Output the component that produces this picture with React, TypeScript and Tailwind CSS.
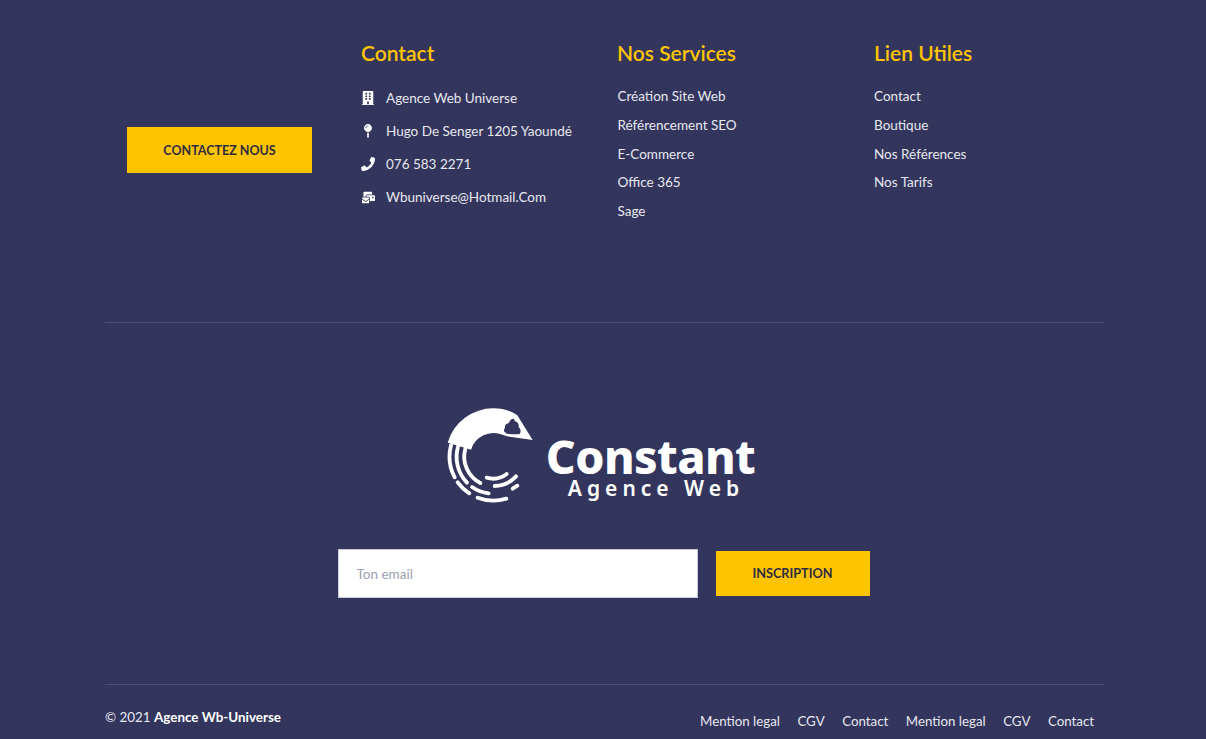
import { FaBuilding, FaMapPin, FaPhone, FaMailBulk } from "react-icons/fa"

const FONT = "font-['Lato','Noto_Sans',sans-serif]"

const contactRows = [
  { icon: "building", label: "Agence Web Universe" },
  { icon: "pin", label: "Hugo De Senger 1205 Yaoundé" },
  { icon: "phone", label: "076 583 2271" },
  { icon: "mail", label: "Wbuniverse@Hotmail.Com" },
]

const services = ["Création Site Web", "Référencement SEO", "E-Commerce", "Office 365", "Sage"]
const liens = ["Contact", "Boutique", "Nos Références", "Nos Tarifs"]
const bottomLinks = ["Mention legal", "CGV", "Contact", "Mention legal", "CGV", "Contact"]

function RowIcon({ name }: { name: string }) {
  if (name === "building") return <FaBuilding size={14} />
  if (name === "pin") return <FaMapPin size={14} />
  if (name === "phone") return <FaPhone size={14} />
  return <FaMailBulk size={13} />
}

function Logo() {
  return (
    <div className="flex items-start">
      {/* mark traced at 3x, rings are concentric around 165,165 */}
      <svg width="90" height="97" viewBox="22 20 270 291" className="mr-[10px] shrink-0">
        <path
          d="M27 124A142 142 0 0 1 165 21C192 21 216 28 236 42L282 116L205 105C200 103 196 101 192 100A71 71 0 0 0 97 145Z"
          fill="#fff"
        />
        <path
          d="M223 52c-6 1-11 6-12 13-8 1-14 7-12 15-3 3-4 7-2 11l8 6c13 2 26 3 38 1 5-8 3-15-3-20 2-10-4-17-11-18-1-4-3-7-6-8z"
          fill="#33355c"
        />
        <g fill="none" stroke="#fff" strokeWidth="11.5" strokeLinecap="round">
          <path d="M37 132A133 133 0 0 0 48 228" />
          <path d="M57 243A133 133 0 0 0 92 276" />
          <path d="M117 289A133 133 0 0 0 203 292" />
          <path d="M58 136A112 112 0 0 0 85 244" />
          <path d="M100 257A112 112 0 0 0 150 276" />
          <path d="M222 262L236 253" />
          <path d="M80 142A89 89 0 0 0 125 245" />
          <path d="M168 254A89 89 0 0 0 232 225" />
          <path d="M144 229A67 67 0 0 0 204 218" />
        </g>
      </svg>
      <div className="flex flex-col items-center pt-[26px]">
        <span className="font-['Noto_Sans',sans-serif] text-[46.5px] leading-[44px] font-extrabold tracking-[-0.6px] text-white">
          Constant
        </span>
        <span className="pl-[11px] font-['Noto_Sans',sans-serif] text-[21px] leading-[20px] font-semibold tracking-[5px] text-white">
          Agence Web
        </span>
      </div>
    </div>
  )
}

export default function App() {
  return (
    <div className={`h-[739px] overflow-hidden bg-[#33355c] text-white ${FONT}`}>
      <div className="ml-[105px] w-[999px]">
        <div className="flex h-[323px] border-b border-[#4d4f75]">
          <div className="w-[256px] pt-[127px] pl-[22px]">
            <button className="h-[46px] w-[185px] bg-[#ffc400] pt-[2px] text-[12.5px] font-bold text-[#2d2d40]">CONTACTEZ NOUS</button>
          </div>

          <div className="w-[256.5px]">
            <h4 className="pt-[37px] text-[21px] leading-[32px] font-semibold text-[#ffc400]">Contact</h4>
            <ul className="mt-[19px] flex flex-col gap-[13px]">
              {contactRows.map((r) => (
                <li key={r.label} className="flex h-5 items-center gap-[11px] text-[13.5px] text-[#e8e8f0]">
                  <span className="flex w-[14px] justify-center text-white">
                    <RowIcon name={r.icon} />
                  </span>
                  <span>{r.label}</span>
                </li>
              ))}
            </ul>
          </div>

          <div className="w-[256.5px]">
            <h4 className="-ml-[0.5px] pt-[37px] text-[21px] leading-[32px] font-semibold text-[#ffc400]">Nos Services</h4>
            <ul className="mt-[17px] flex flex-col gap-[8.8px]">
              {services.map((s) => (
                <li key={s} className="h-5 text-[13.5px] leading-5 text-[#e8e8f0]">{s}</li>
              ))}
            </ul>
          </div>

          <div className="flex-1">
            <h4 className="pt-[37px] text-[21px] leading-[32px] font-semibold text-[#ffc400]">Lien Utiles</h4>
            <ul className="mt-[17px] flex flex-col gap-[8.8px]">
              {liens.map((s) => (
                <li key={s} className="h-5 text-[13.5px] leading-5 text-[#e8e8f0]">{s}</li>
              ))}
            </ul>
          </div>
        </div>

        <div className="flex h-[362px] flex-col items-center border-b border-[#4d4f75]">
          <div className="mt-[85px] -translate-x-[4px]"><Logo /></div>
          <div className="mt-[44px] flex -translate-x-[1px] items-center gap-[18px]">
            <input
              placeholder="Ton email"
              className="h-[49px] w-[360px] border border-[#c9cbdc] bg-white px-[18px] text-[13.5px] text-gray-700 outline-none placeholder:text-gray-400"
            />
            <button className="h-[45px] w-[154px] bg-[#ffc400] text-[12.7px] font-bold text-[#2d2d40]">INSCRIPTION</button>
          </div>
        </div>

        <div className="flex items-start justify-between pt-[22px] pr-[10px]">
          <p className="text-[13.4px] text-[#e8e8f0]">
            © 2021 <strong className="font-bold text-white">Agence Wb-Universe</strong>
          </p>
          <div className="mt-[5px] flex gap-[17.5px] text-[13.3px] text-[#e8e8f0]">
            {bottomLinks.map((l, i) => (
              <span key={i}>{l}</span>
            ))}
          </div>
        </div>
      </div>
    </div>
  )
}
